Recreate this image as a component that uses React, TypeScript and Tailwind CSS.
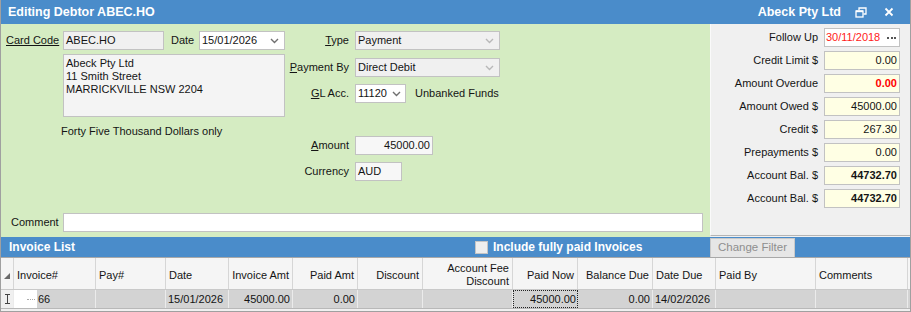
import React from "react";

function Chevron({ light }: { light?: boolean }) {
  return (
    <svg width="9" height="6" viewBox="0 0 9 6" className="shrink-0">
      <polyline
        points="1,1 4.5,4.5 8,1"
        fill="none"
        stroke={light ? "#b8b8b8" : "#707070"}
        strokeWidth="1.4"
      />
    </svg>
  );
}

function Box({
  className,
  children,
}: {
  className?: string;
  children?: React.ReactNode;
}) {
  return (
    <div
      className={
        "h-[19px] border border-[#c2c2c2] flex items-center px-[2px] leading-none " +
        (className ?? "")
      }
    >
      {children}
    </div>
  );
}

function LeftPanel() {
  return (
    <div className="flex-1 bg-[#d5ecc2] flex flex-col pl-[5px] pr-[7px] pt-[7px] pb-[5px]">
      <div className="flex">
        <div className="w-[279px] flex flex-col">
          <div className="flex items-center h-[19px]">
            <span className="w-[57px] underline">Card Code</span>
            <Box className="w-[101px] bg-[#f0f0f0]">ABEC.HO</Box>
            <span className="ml-[7px] w-[28px]">Date</span>
            <Box className="w-[86px] bg-white justify-between pr-[5px]">
              <span>15/01/2026</span>
              <Chevron />
            </Box>
          </div>
          <div className="ml-[57px] mt-[4px] w-[222px] h-[63px] border border-[#c2c2c2] bg-[#f4f4f4] px-[2px] pt-[2px] leading-[13px]">
            Abeck Pty Ltd
            <br />
            11 Smith Street
            <br />
            MARRICKVILLE NSW 2204
          </div>
          <div className="ml-[55px] mt-[8px] leading-[13px]">
            Forty Five Thousand Dollars only
          </div>
        </div>

        <div className="flex flex-col">
          <div className="flex items-center gap-[6px]">
            <span className="w-[64px] text-right">
              <span className="underline">T</span>ype
            </span>
            <Box className="w-[145px] bg-[#f0f0f0] justify-between pr-[5px]">
              <span>Payment</span>
              <Chevron light />
            </Box>
          </div>
          <div className="flex items-center gap-[6px] mt-[8px]">
            <span className="w-[64px] text-right">
              <span className="underline">P</span>ayment By
            </span>
            <Box className="w-[145px] bg-[#f0f0f0] justify-between pr-[5px]">
              <span>Direct Debit</span>
              <Chevron light />
            </Box>
          </div>
          <div className="flex items-center gap-[6px] mt-[7px]">
            <span className="w-[64px] text-right">
              <span className="underline">G</span>L Acc.
            </span>
            <Box className="w-[51px] bg-white justify-between pr-[4px]">
              <span>11120</span>
              <Chevron />
            </Box>
            <span className="ml-[3px]">Unbanked Funds</span>
          </div>
          <div className="flex items-center gap-[6px] mt-[33px]">
            <span className="w-[64px] text-right">
              <span className="underline">A</span>mount
            </span>
            <Box className="w-[78px] bg-[#f7f7f7] justify-end">45000.00</Box>
          </div>
          <div className="flex items-center gap-[6px] mt-[7px]">
            <span className="w-[64px] text-right">Currency</span>
            <Box className="w-[47px] bg-[#f7f7f7]">AUD</Box>
          </div>
        </div>
      </div>

      <div className="mt-auto flex items-center">
        <span className="w-[57px] pl-[5px]">Comment</span>
        <div className="flex-1 h-[19px] bg-white border border-[#c2c2c2]" />
      </div>
    </div>
  );
}

const summary = [
  { label: "Credit Limit $", value: "0.00" },
  { label: "Amount Overdue", value: "0.00", cls: "font-bold text-[#ff0000]" },
  { label: "Amount Owed $", value: "45000.00" },
  { label: "Credit $", value: "267.30" },
  { label: "Prepayments $", value: "0.00" },
  { label: "Account Bal. $", value: "44732.70", cls: "font-bold" },
  { label: "Account Bal. $", value: "44732.70", cls: "font-bold" },
];

function RightPanel() {
  return (
    <div className="w-[200px] bg-[#f0f0f0] border-l border-[#fafafa] flex flex-col gap-[4px] pt-[4px] pr-[10px] border-b border-b-[#b5b5b5] mb-[1px]">
      <div className="flex items-center justify-end gap-[6px]">
        <span>Follow Up</span>
        <Box className="w-[76px] bg-white justify-between pr-[3px] pl-[1px]">
          <span className="text-[#ff1a1a]">30/11/2018</span>
          <span className="flex gap-[1.5px]">
            <span className="w-[2px] h-[2px] bg-[#555]" />
            <span className="w-[2px] h-[2px] bg-[#555]" />
            <span className="w-[2px] h-[2px] bg-[#555]" />
          </span>
        </Box>
      </div>
      {summary.map((r, i) => (
        <div key={i} className="flex items-center justify-end gap-[6px]">
          <span>{r.label}</span>
          <Box className={"w-[76px] bg-[#ffffe4] justify-end " + (r.cls ?? "")}>
            {r.value}
          </Box>
        </div>
      ))}
    </div>
  );
}

const cols = [
  { w: "w-[13px]", h: "", a: "" },
  { w: "w-[82px]", h: "Invoice#", a: "text-left" },
  { w: "w-[70px]", h: "Pay#", a: "text-left" },
  { w: "w-[63px]", h: "Date", a: "text-left" },
  { w: "w-[64px]", h: "Invoice Amt", a: "text-right" },
  { w: "w-[65px]", h: "Paid Amt", a: "text-right" },
  { w: "w-[65px]", h: "Discount", a: "text-right" },
  { w: "w-[90px]", h: "Account Fee Discount", a: "text-right" },
  { w: "w-[65px]", h: "Paid Now", a: "text-right" },
  { w: "w-[75px]", h: "Balance Due", a: "text-right" },
  { w: "w-[63px]", h: "Date Due", a: "text-left" },
  { w: "w-[100px]", h: "Paid By", a: "text-left" },
  { w: "w-[92px]", h: "Comments", a: "text-left" },
];

function Grid() {
  return (
    <div className="flex-1 flex flex-col border-t border-[#a8a8a8] bg-[#f0f0f0]">
      <div className="flex h-[32px] bg-[#f5f5f5] border-b border-[#c9c9c9]">
        {cols.map((c, i) => (
          <div
            key={i}
            className={
              c.w +
              " shrink-0 border-r border-[#d6d6d6] flex items-center px-[3px] pt-[3px] leading-[13px] " +
              (c.a === "text-right" ? "justify-end text-right" : "justify-start")
            }
          >
            {i === 0 ? (
              <svg width="6" height="6" viewBox="0 0 6 6" className="self-end mb-[10px] -mr-[1px]">
                <polygon points="6,0 6,6 0,6" fill="#6a6a6a" />
              </svg>
            ) : i === 7 ? (
              <span>
                Account Fee
                <br />
                Discount
              </span>
            ) : (
              <span>{c.h}</span>
            )}
          </div>
        ))}
      </div>
      <div className="flex h-[19px] bg-[#d3d3d3] border-b border-[#b8b8b8] leading-none">
        <div className="w-[13px] shrink-0 border-r border-[#ebebeb] bg-[#f0f0f0] flex items-center justify-center">
          <svg width="5" height="10" viewBox="0 0 5 10">
            <path d="M0 0.5 H5 M2.5 0.5 V9.5 M0 9.5 H5" stroke="#444" strokeWidth="1" fill="none" />
          </svg>
        </div>
        <div className="w-[82px] shrink-0 border-r border-[#ebebeb] flex items-center">
          <div className="w-[23px] h-full bg-white flex items-center justify-end pr-[2px]">
            <div className="w-[8px] border-t border-dotted border-[#aaa]" />
          </div>
          <span className="pl-[1px]">66</span>
        </div>
        <div className="w-[70px] shrink-0 border-r border-[#ebebeb]" />
        <div className="w-[63px] shrink-0 border-r border-[#ebebeb] flex items-center pl-[2px]">
          15/01/2026
        </div>
        <div className="w-[64px] shrink-0 border-r border-[#ebebeb] flex items-center justify-end pr-[2px]">
          45000.00
        </div>
        <div className="w-[65px] shrink-0 border-r border-[#ebebeb] flex items-center justify-end pr-[2px]">
          0.00
        </div>
        <div className="w-[65px] shrink-0 border-r border-[#ebebeb]" />
        <div className="w-[90px] shrink-0 border-r border-[#ebebeb]" />
        <div className="w-[65px] shrink-0 border border-dotted border-[#222] flex items-center justify-end pr-[1px]">
          45000.00
        </div>
        <div className="w-[75px] shrink-0 border-r border-[#ebebeb] flex items-center justify-end pr-[2px]">
          0.00
        </div>
        <div className="w-[63px] shrink-0 border-r border-[#ebebeb] flex items-center pl-[2px]">
          14/02/2026
        </div>
        <div className="w-[100px] shrink-0 border-r border-[#ebebeb]" />
        <div className="w-[92px] shrink-0 border-r border-[#ebebeb]" />
      </div>
    </div>
  );
}

export default function App() {
  return (
    <div className="w-[911px] h-[312px] flex flex-col border-x border-b border-[#a0a0a0] bg-[#f0f0f0] text-[11px] text-[#141414] font-['Liberation_Sans',Arial,sans-serif] overflow-hidden">
      <div className="h-[24px] shrink-0 bg-[#4a8cca] flex items-center justify-between pl-[7px] pr-[16px] text-white font-bold">
        <span className="text-[12.5px]">Editing Debtor ABEC.HO</span>
        <div className="flex items-center">
          <span className="text-[12.5px]">Abeck Pty Ltd</span>
          <svg width="12" height="11" viewBox="0 0 12 11" className="ml-[14px]">
            <path d="M4 3 V1 H11 V7 H8.5" stroke="white" strokeWidth="1.3" fill="none" />
            <rect x="1" y="4" width="7" height="6" stroke="white" strokeWidth="1.3" fill="none" />
            <rect x="1" y="3.4" width="7" height="1.8" fill="white" />
          </svg>
          <svg width="10" height="10" viewBox="0 0 10 10" className="ml-[17px]">
            <path d="M1.5 1.5 L8.5 8.5 M8.5 1.5 L1.5 8.5" stroke="white" strokeWidth="1.8" />
          </svg>
        </div>
      </div>

      <div className="h-[213px] shrink-0 flex">
        <LeftPanel />
        <RightPanel />
      </div>

      <div className="h-[20px] shrink-0 bg-[#4a8cca] flex text-white font-bold text-[12px]">
        <div className="flex-1 flex items-center">
          <span className="w-[474px] pl-[8px]">Invoice List</span>
          <div className="w-[13px] h-[13px] bg-[#eeeeee] border border-[#c4c4c4]" />
          <span className="ml-[5px]">Include fully paid Invoices</span>
        </div>
        <div className="w-[200px] pt-[1px]">
          <div className="w-[85px] h-[19px] bg-[#e6e6e6] border border-[#c9c9c9] border-b-0 flex items-center justify-center font-normal text-[11.5px] text-[#8e8e8e]">
            Change Filter
          </div>
        </div>
      </div>

      <Grid />
    </div>
  );
}
